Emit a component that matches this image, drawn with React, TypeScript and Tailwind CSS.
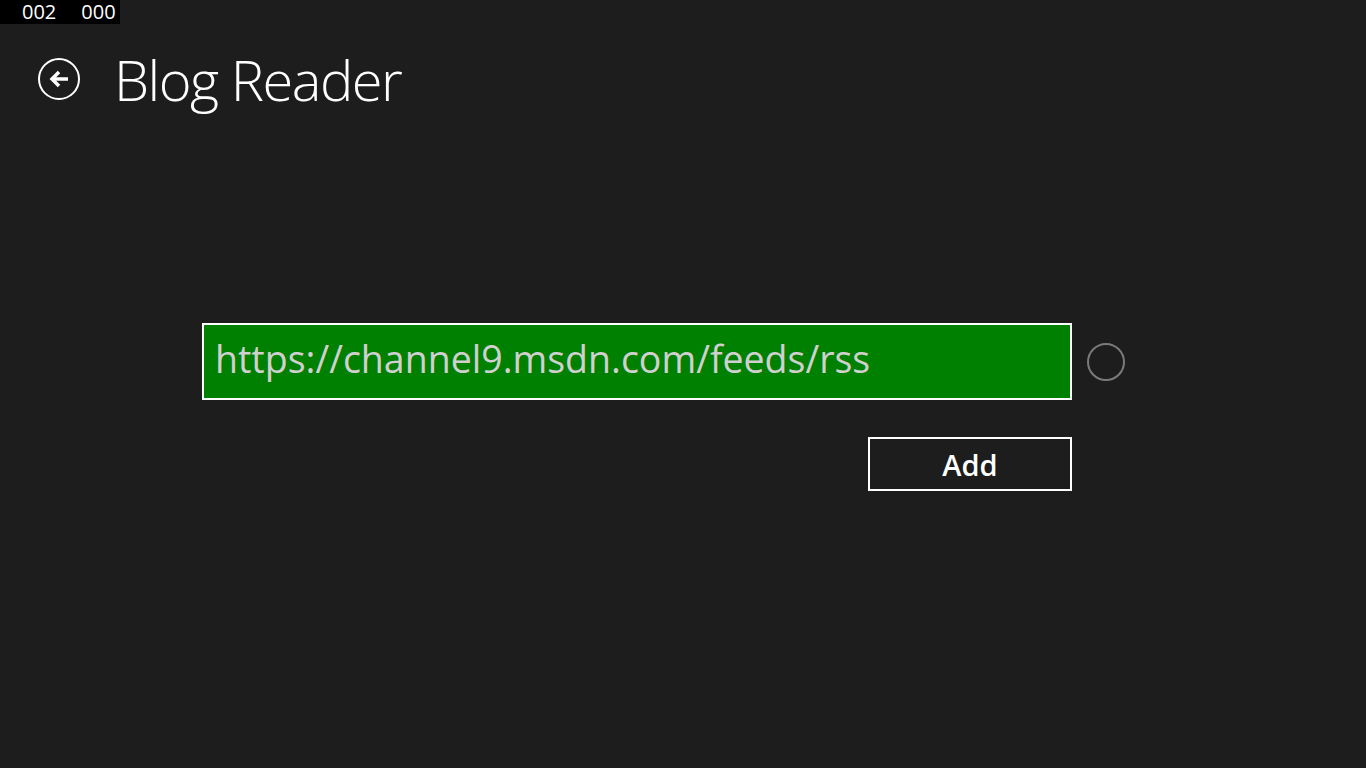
import React from "react";

function BackButton() {
  return (
    <button className="flex h-[42px] w-[42px] items-center justify-center rounded-full border-2 border-white text-white">
      <svg width="22" height="20" viewBox="0 0 22 20" fill="none">
        <path d="M20 10H5" stroke="white" strokeWidth="3.5" />
        <path d="M11 3L4 10l7 7" stroke="white" strokeWidth="3.5" fill="none" />
      </svg>
    </button>
  );
}

export default function App() {
  return (
    <div className="relative min-h-screen w-full bg-[#1d1d1d] font-['Open_Sans',sans-serif] text-white">
      <div className="absolute left-0 top-0 flex h-[24px] w-[120px] items-center gap-[25px] bg-black pl-[22px] text-[20px] leading-none text-white">
        <span>002</span>
        <span>000</span>
      </div>

      <header className="flex h-[160px] items-center pb-[2px]">
        <div className="ml-[38px]">
          <BackButton />
        </div>
        <h1 className="ml-[34px] text-[56px] font-light leading-none tracking-[-1.5px]">Blog Reader</h1>
      </header>

      <main className="ml-[202px] mt-[163px] flex flex-col">
        <div className="flex items-center">
          <div className="flex h-[77px] w-[870px] items-center border-2 border-white bg-[#008000] pl-[11px] pb-[6px]">
            <span className="text-[37.5px] leading-none text-[#d0d0d0]">https://channel9.msdn.com/feeds/rss</span>
          </div>
          <div className="ml-[15px] h-[38px] w-[38px] rounded-full border-2 border-[#7a7a7a]" />
        </div>
        <button className="ml-[666px] mt-[37px] flex h-[54px] w-[204px] items-center justify-center border-2 border-white text-[29px] font-semibold leading-none text-white">
          Add
        </button>
      </main>
    </div>
  );
}
